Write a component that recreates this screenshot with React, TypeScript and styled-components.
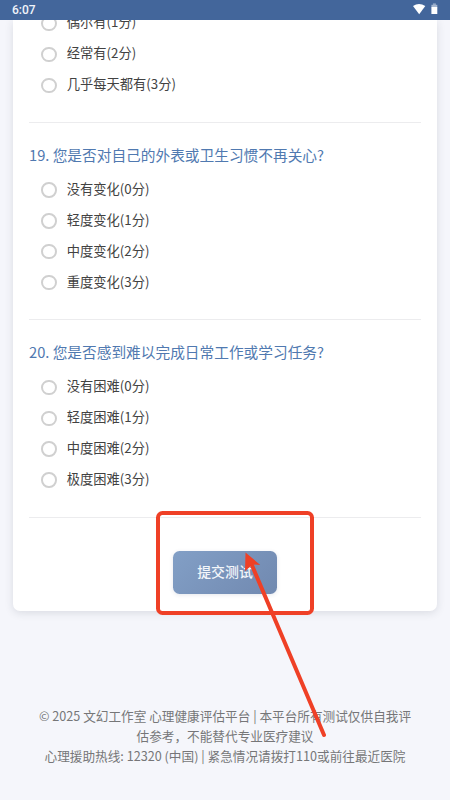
import React from "react";
import styled, { createGlobalStyle } from "styled-components";

const GlobalStyle = createGlobalStyle`
  * { box-sizing: border-box; }
  body {
    margin: 0;
    background: #f5f6fb;
    font-family: "Noto Sans CJK SC", "Noto Sans", sans-serif;
  }
`;

const Screen = styled.div`
  position: relative;
  width: 450px;
  height: 800px;
  overflow: hidden;
  display: flex;
  flex-direction: column;
  background: #f5f6fb;
`;

const StatusBar = styled.header`
  flex: none;
  height: 20px;
  padding: 0 12px;
  display: flex;
  align-items: center;
  justify-content: space-between;
  background: #43669b;
  color: #f0f4fa;
  font: 500 12px/20px Roboto, sans-serif;
`;

const StatusIcons = styled.svg`
  display: block;
  width: 28px;
  height: 20px;
`;

const Viewport = styled.main`
  flex: 1;
  min-height: 0;
  overflow: hidden;
  display: flex;
  flex-direction: column;
`;

const Card = styled.section`
  flex: none;
  height: 590.8px;
  margin: 0 12.6px;
  padding: 0 16.4px;
  display: flex;
  flex-direction: column;
  background: #fff;
  border-radius: 0 0 7px 7px;
  box-shadow: 0 2px 9px rgba(40, 45, 65, 0.13);
`;

const Question = styled.div<{ $cut?: boolean }>`
  flex: none;
  height: ${(p) => (p.$cut ? "102.8px" : "197.4px")};
  display: flex;
  flex-direction: column;
  justify-content: flex-end;
  padding-bottom: 21.5px;
  border-bottom: 1px solid #ececee;
`;

const Title = styled.h2`
  margin: 0 0 8.5px;
  height: 22px;
  color: #5079b0;
  font-size: 14.7px;
  line-height: 22px;
  font-weight: 400;
  white-space: nowrap;
`;

const Option = styled.label`
  flex: none;
  height: 30.9px;
  padding-left: 12.2px;
  display: flex;
  align-items: center;
  gap: 10.2px;
  color: #424242;
  font-size: 13.27px;
  line-height: 20px;
  white-space: nowrap;
`;

const OptionText = styled.span`
  margin-bottom: 1.4px;
`;

const Radio = styled.span`
  width: 15.4px;
  height: 15.4px;
  margin-top: 0.8px;
  border: 2px solid #d0d0d0;
  border-radius: 50%;
`;

const Submit = styled.button`
  align-self: center;
  width: 103.6px;
  height: 43.2px;
  margin-top: 33.2px;
  padding: 0 0 2px;
  border: 0;
  border-radius: 6.5px;
  background: linear-gradient(135deg, #829fc6, #7189b0);
  box-shadow: 0 1px 4px rgba(40, 60, 100, 0.12);
  color: #f3f6fa;
  font: 500 13.9px/20px "Noto Sans CJK SC", sans-serif;
`;

const Footer = styled.footer`
  margin-top: 95.2px;
  color: #767678;
  font-size: 12.65px;
  line-height: 20px;
  text-align: center;
`;

const FooterLine = styled.div`
  white-space: nowrap;
`;

const Annotation = styled.svg`
  position: absolute;
  inset: 0;
  pointer-events: none;
`;

const questions = [
  { title: "", options: ["偶尔有(1分)", "经常有(2分)", "几乎每天都有(3分)"] },
  {
    title: "19. 您是否对自己的外表或卫生习惯不再关心?",
    options: ["没有变化(0分)", "轻度变化(1分)", "中度变化(2分)", "重度变化(3分)"],
  },
  {
    title: "20. 您是否感到难以完成日常工作或学习任务?",
    options: ["没有困难(0分)", "轻度困难(1分)", "中度困难(2分)", "极度困难(3分)"],
  },
];

const footerLines = [
  "© 2025 文幻工作室 心理健康评估平台 | 本平台所有测试仅供自我评",
  "估参考，不能替代专业医疗建议",
  "心理援助热线: 12320 (中国) | 紧急情况请拨打110或前往最近医院",
];

export default function App() {
  return (
    <>
      <GlobalStyle />
      <Screen>
        <StatusBar>
          <span>6:07</span>
          <StatusIcons viewBox="0 0 28 20">
            <path d="M3 6.1Q9 2.1 15.3 6.1L9.2 14.3Z" fill="#fff" />
            <path d="M22.9 3.5h3v1.3h-3z" fill="#a4b6d0" />
            <path d="M21.4 4.8h5.9v2.4h-5.9z" fill="#a4b6d0" />
            <path d="M21.4 7h5.9v7h-5.9z" fill="#fff" />
          </StatusIcons>
        </StatusBar>
        <Viewport>
          <Card>
            {questions.map((q, i) => (
              <Question key={i} $cut={!q.title}>
                {q.title && <Title>{q.title}</Title>}
                {q.options.map((o) => (
                  <Option key={o}>
                    <Radio />
                    <OptionText>{o}</OptionText>
                  </Option>
                ))}
              </Question>
            ))}
            <Submit>提交测试</Submit>
          </Card>
          <Footer>
            {footerLines.map((line) => (
              <FooterLine key={line}>{line}</FooterLine>
            ))}
          </Footer>
        </Viewport>
        <Annotation width="450" height="800" viewBox="0 0 450 800">
          <rect x="158" y="513" width="154" height="100" rx="4.5" fill="none" stroke="#ef4026" strokeWidth="4" />
          <path d="M251 563L324 735" stroke="#ef4026" strokeWidth="4" strokeLinecap="round" />
          <path d="M245.5 552.5L260.3 565L252.5 564.5L245 571.2Z" fill="#ef4026" />
        </Annotation>
      </Screen>
    </>
  );
}
